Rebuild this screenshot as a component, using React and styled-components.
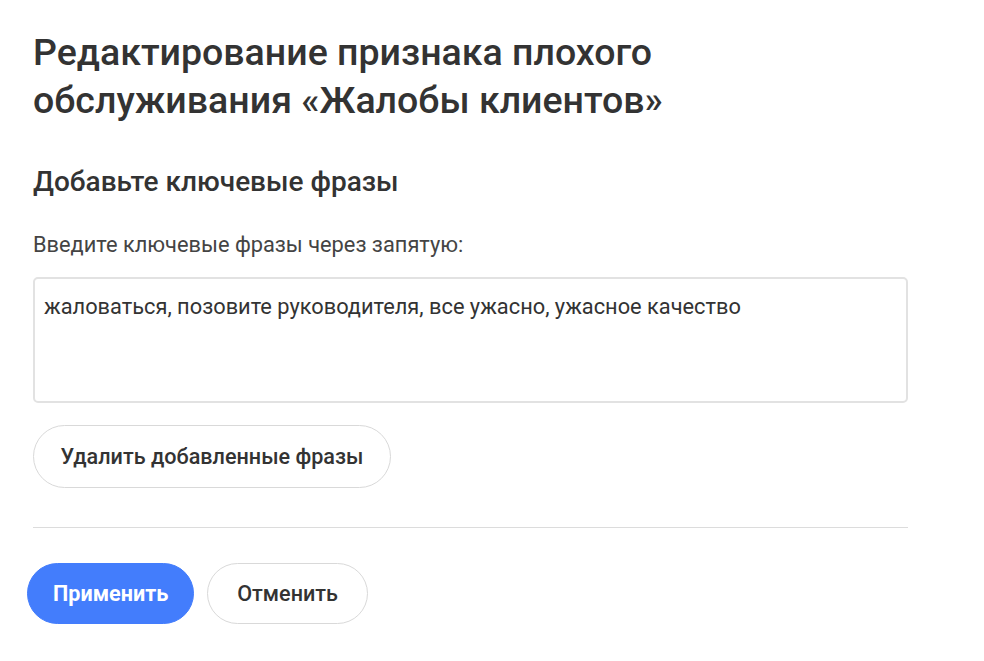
import React, { useState } from "react";
import styled, { createGlobalStyle } from "styled-components";

const GlobalStyle = createGlobalStyle`
  html, body {
    margin: 0;
    background: #fff;
  }
  body {
    font-family: Roboto, "Noto Sans", Arial, sans-serif;
    color: #333;
  }
`;

const Page = styled.div`
  padding: 28px 76px 30px 33px;
  width: 875px;
`;

const Title = styled.h1`
  margin: 0;
  font-size: 37.5px;
  line-height: 48px;
  font-weight: 500;
  color: #333;
`;

const SectionTitle = styled.h2`
  margin: 41px 0 0;
  font-size: 28px;
  line-height: 34px;
  font-weight: 500;
  color: #333;
`;

const Label = styled.label`
  display: block;
  margin-top: 33px;
  font-size: 21.8px;
  line-height: 26px;
  color: #444;
`;

const TextArea = styled.textarea`
  display: block;
  box-sizing: border-box;
  width: 100%;
  height: 126px;
  margin-top: 19px;
  padding: 15px 9px;
  border: 2px solid #e2e2e2;
  border-radius: 5px;
  font-family: inherit;
  font-size: 21.8px;
  line-height: 26px;
  color: #333;
  resize: none;
  outline: none;
`;

const PillButton = styled.button`
  box-sizing: border-box;
  height: ${p => p.$height || 62}px;
  padding: 0 ${p => p.$pad || 26}px;
  border-radius: 32px;
  border: 1px solid ${p => (p.$primary ? "#437dfc" : "#d9d9d9")};
  background: ${p => (p.$primary ? "#437dfc" : "#fff")};
  color: ${p => (p.$primary ? "#fff" : "#333")};
  font-family: inherit;
  font-size: 21.6px;
  font-weight: ${p => (p.$primary ? 700 : 500)};
  cursor: pointer;
`;

const ClearRow = styled.div`
  margin-top: 22px;
`;

const Divider = styled.hr`
  margin: 39px 0 0;
  border: none;
  border-top: 1px solid #dcdcdc;
`;

const Footer = styled.div`
  display: flex;
  gap: 13px;
  margin: 35px 0 0 -6px;
`;

export default function App() {
  const [phrases, setPhrases] = useState(
    "жаловаться, позовите руководителя, все ужасно, ужасное качество"
  );

  return (
    <>
      <GlobalStyle />
      <Page>
        <Title>
          Редактирование признака плохого
          <br />
          обслуживания «Жалобы клиентов»
        </Title>
        <SectionTitle>Добавьте ключевые фразы</SectionTitle>
        <Label htmlFor="phrases">Введите ключевые фразы через запятую:</Label>
        <TextArea
          id="phrases"
          value={phrases}
          onChange={e => setPhrases(e.target.value)}
        />
        <ClearRow>
          <PillButton $height={63} $pad={26.5} onClick={() => setPhrases("")}>
            Удалить добавленные фразы
          </PillButton>
        </ClearRow>
        <Divider />
        <Footer>
          <PillButton $primary $height={61} $pad={25}>Применить</PillButton>
          <PillButton $height={61} $pad={29}>Отменить</PillButton>
        </Footer>
      </Page>
    </>
  );
}
